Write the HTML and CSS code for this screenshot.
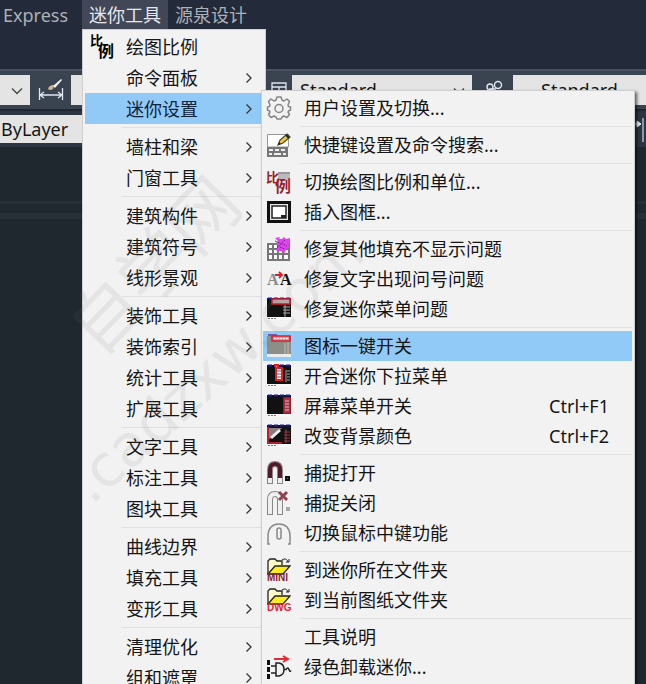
FILE: index.html
```html
<!DOCTYPE html>
<html lang="zh-CN">
<head>
<meta charset="utf-8">
<title>迷你工具</title>
<link rel="stylesheet" href="styles.css">
</head>
<body>
<svg class="defs" aria-hidden="true">
  <symbol id="arrow" viewBox="0 0 8 12"><path d="M1.5 1.5 6 6l-4.500 4.500" fill="none" stroke="#333" stroke-width="1.300"/></symbol>
  <symbol id="down" viewBox="0 0 12 8"><path d="M1 1.500 6 6.500l5-5" fill="none" stroke="#444" stroke-width="1.300"/></symbol>
  <symbol id="screen" viewBox="0 0 24 24">
    <path d="M0 1h24v19H0z" fill="#111"/><path d="M1 1.500h23" stroke="#1c1c9c" stroke-width="2" stroke-dasharray="4 2"/>
    <path d="M0 20h24v3H0z" fill="#f8f8f8"/><path d="M1 21.500h8" stroke="#777" stroke-dasharray="2 1"/>
  </symbol>
  <symbol id="folder" viewBox="0 0 24 18">
    <path d="M1 16V3l2-2h5l2 2h5v4" fill="#fffbc8" stroke="#222" stroke-width="1.300"/>
    <path d="M1 16 8 8h15l-7 8z" fill="#ffeb22" stroke="#222" stroke-width="1.300"/>
    <path d="M15 2c3-2 5-1 6 2m1-3v3h-3" fill="none" stroke="#222"/>
  </symbol>
</svg>
<div class="app">
  <nav class="menubar">
    <button>Express</button>
    <button class="open">迷你工具</button>
    <button>源泉设计</button>
  </nav>
  <div class="toolbar styles-row">
    <label class="field narrow"><select aria-label="图层"><option></option></select><svg class="caret"><use href="#down"/></svg></label>
    <button class="tool dim" aria-label="标注样式">
      <svg width="26" height="24" viewBox="0 0 26 24"><path d="M1.500 10v12M24.500 10v12M2 17h22M6 14l-4 3 4 3M20 14l4 3-4 3" fill="none" stroke="#dfe6ee" stroke-width="1.300"/><path d="M10 11q1-4 6-4l-1 4q-3 2-5 0z" fill="#cfb795"/><path d="m15 8 8-7 1 1-7 8z" fill="#f1f1ee"/></svg>
    </button>
    <label class="field dimstyle"><select aria-label="标注样式"><option></option></select></label>
    <button class="tool table" aria-label="表格样式">
      <svg width="16" height="16" viewBox="0 0 16 16"><path d="M1 1h14v14H1zM1 5h14M1 10h14M8 5v10" fill="none" stroke="#dfe6ee" stroke-width="1.300"/></svg>
    </button>
    <label class="field tablestyle"><select aria-label="表格样式"><option>Standard</option></select><svg class="caret"><use href="#down"/></svg></label>
    <button class="tool leader" aria-label="引线样式">
      <svg width="20" height="20" viewBox="0 0 20 20"><g fill="none" stroke="#dfe6ee" stroke-width="1.400"><circle cx="15" cy="5" r="3.500"/><circle cx="7" cy="7" r="3"/><path d="m1 17 5-8m0 0h7"/></g></svg>
    </button>
    <label class="field leaderstyle"><select aria-label="引线样式"><option>Standard</option></select></label>
  </div>
  <div class="toolbar layer-row">
    <label class="field layer"><select aria-label="颜色"><option>ByLayer</option></select></label>
    <button class="tool edge" aria-label="标注"><svg width="10" height="30" viewBox="0 0 10 30"><path d="M0 10h5M2 7l4 3-4 3z" fill="#e7edf2" stroke="#e7edf2"/><path d="M8 4v24" stroke="#a9bac8" stroke-width="1.500"/></svg></button>
  </div>
  <main class="canvas"><div class="tabstrip"></div></main>

  <div class="menu main-menu" role="menu">
    <div class="group">
      <button role="menuitem"><svg class="icon" viewBox="0 0 24 24"><text x="0" y="10" class="glyph-s">比</text><text x="8" y="22" class="glyph-m">例</text></svg><span>绘图比例</span></button>
      <button role="menuitem"><span>命令面板</span><svg class="arrow"><use href="#arrow"/></svg></button>
      <button role="menuitem" class="active"><span>迷你设置</span><svg class="arrow"><use href="#arrow"/></svg></button>
    </div>
    <div class="group">
      <button role="menuitem"><span>墙柱和梁</span><svg class="arrow"><use href="#arrow"/></svg></button>
      <button role="menuitem"><span>门窗工具</span><svg class="arrow"><use href="#arrow"/></svg></button>
    </div>
    <div class="group">
      <button role="menuitem"><span>建筑构件</span><svg class="arrow"><use href="#arrow"/></svg></button>
      <button role="menuitem"><span>建筑符号</span><svg class="arrow"><use href="#arrow"/></svg></button>
      <button role="menuitem"><span>线形景观</span><svg class="arrow"><use href="#arrow"/></svg></button>
    </div>
    <div class="group">
      <button role="menuitem"><span>装饰工具</span><svg class="arrow"><use href="#arrow"/></svg></button>
      <button role="menuitem"><span>装饰索引</span><svg class="arrow"><use href="#arrow"/></svg></button>
      <button role="menuitem"><span>统计工具</span><svg class="arrow"><use href="#arrow"/></svg></button>
      <button role="menuitem"><span>扩展工具</span><svg class="arrow"><use href="#arrow"/></svg></button>
    </div>
    <div class="group">
      <button role="menuitem"><span>文字工具</span><svg class="arrow"><use href="#arrow"/></svg></button>
      <button role="menuitem"><span>标注工具</span><svg class="arrow"><use href="#arrow"/></svg></button>
      <button role="menuitem"><span>图块工具</span><svg class="arrow"><use href="#arrow"/></svg></button>
    </div>
    <div class="group">
      <button role="menuitem"><span>曲线边界</span><svg class="arrow"><use href="#arrow"/></svg></button>
      <button role="menuitem"><span>填充工具</span><svg class="arrow"><use href="#arrow"/></svg></button>
      <button role="menuitem"><span>变形工具</span><svg class="arrow"><use href="#arrow"/></svg></button>
    </div>
    <div class="group">
      <button role="menuitem"><span>清理优化</span><svg class="arrow"><use href="#arrow"/></svg></button>
      <button role="menuitem"><span>组和遮罩</span><svg class="arrow"><use href="#arrow"/></svg></button>
    </div>
  </div>

  <div class="menu sub-menu" role="menu">
    <div class="group">
      <button role="menuitem"><svg class="icon" viewBox="0 0 24 24"><g fill="none" stroke="#858585" stroke-width="1.500" stroke-linejoin="round"><path d="M9 4 10 1h4l1 3 2 1 3-2 2.500 2.500L21 9l.500 1.500 2 .500v3l-2 1L21 16l1.500 2.500L20 21.500l-3-1.500-2 1-1 2h-4l-1-2-2-1-3 1.500L1.500 18.500 3 16l-.500-1-2-1v-3l2-.500L3 9 1.500 5.500 4 3l3 2z"/><circle cx="12" cy="12.500" r="4"/></g></svg><span>用户设置及切换...</span></button>
    </div>
    <div class="group">
      <button role="menuitem"><svg class="icon" viewBox="0 0 24 24"><path d="M.5 1.500h21V14H.5z" fill="#fff" stroke="#999"/><path d="M0 14h21v10H0z" fill="#777"/><path d="M2 16h4v2H2zm6 0h4v2H8zm6 0h4v2h-4zM2 20h3v2H2zm5 0h7v2H7zm9 0h3v2h-3z" fill="#eee"/><path d="m11 12 2-5 7-6 3 3-7 6z" fill="#f2c63a" stroke="#443" stroke-width="1.200"/><path d="m11 12 1-3 2 2z" fill="#222"/><path d="m19 2 3 3" stroke="#222" stroke-width="2"/></svg><span>快捷键设置及命令搜索...</span></button>
    </div>
    <div class="group">
      <button role="menuitem"><svg class="icon" viewBox="0 0 24 24"><path d="M11 2h12v8H11z" fill="#bbb"/><path d="M11 3h12" stroke="#999" stroke-width="2"/><g class="red"><text x="-1" y="12" class="glyph-s">比</text><text x="8" y="22" class="glyph-m">例</text></g></svg><span>切换绘图比例和单位...</span></button>
      <button role="menuitem"><svg class="icon" viewBox="0 0 24 24"><path d="M1.500 2.500h21v19h-21z" fill="#e5e8e6" stroke="#111" stroke-width="3"/><path d="M5 6h14v12H5z" fill="#fff" stroke="#222" stroke-width="1.500"/><path d="M14 15h5v3h-5z" fill="#222"/></svg><span>插入图框...</span></button>
    </div>
    <div class="group">
      <button role="menuitem"><svg class="icon" viewBox="0 0 24 24"><path d="M1 7h21v16H1zM1 12h21M1 17h21M6 7v16M11 7v16M16 7v16" fill="#fff" stroke="#777" stroke-width="2"/><path d="m8 1 5-1-1 2h3l2-2 2 2 4-1v5l-2 2 2 3-4 1-1 4-4-2-4 1-1-3 2-3-2-3 2-2z" fill="#df42ee"/><path d="m8 4 12 5M18 3l-9 9M10 9l8 3" stroke="#8b1ca0" stroke-dasharray="2 1"/></svg><span>修复其他填充不显示问题</span></button>
      <button role="menuitem"><svg class="icon" viewBox="0 0 24 24"><text x="0" y="18" class="letter gray">A</text><text x="13" y="18" class="letter">A</text><path d="M8 8h7m-3-3 3 3-3 3" fill="none" stroke="#e21d25" stroke-width="1.800"/></svg><span>修复文字出现问号问题</span></button>
      <button role="menuitem"><svg class="icon" viewBox="0 0 24 24"><use href="#screen"/><path d="M5 2h18v5H5z" fill="#b9a5a5" stroke="#cb1c2d" stroke-width="1.600"/><path d="M18 8v12M16 10h7m-7 3h7m-7 3h7" stroke="#aaa"/></svg><span>修复迷你菜单问题</span></button>
    </div>
    <div class="group">
      <button role="menuitem" class="active"><svg class="icon" viewBox="0 0 24 24"><path d="M0 2h24v18H0z" fill="#8e8e88"/><path d="M0 20h24v3H0z" fill="#ececec"/><path d="M1 1h9" stroke="#775ca5" stroke-width="2"/><path d="M5 2h18v5H5z" fill="#d29ba0" stroke="#d51f34" stroke-width="1.600"/><path d="M18 9v11M21 8v12" stroke="#bbb"/><path d="M7 4.500h14" stroke="#eee" stroke-dasharray="2 1"/></svg><span>图标一键开关</span></button>
      <button role="menuitem"><svg class="icon" viewBox="0 0 24 24"><use href="#screen"/><path d="M8 1h3v3h4v12H9V4z" fill="#fff" stroke="#e11d27" stroke-width="2"/><path d="M10 7h4m-4 3h4m-4 3h4" stroke="#555"/><path d="M19 6v12M20 7h3m-3 3h3m-3 3h3m-3 3h3" stroke="#aaa"/></svg><span>开合迷你下拉菜单</span></button>
      <button role="menuitem"><svg class="icon" viewBox="0 0 24 24"><use href="#screen"/><path d="M17 4h6v15h-6z" fill="#9e3b49" stroke="#b5263b" stroke-width="1.500"/><path d="M18 7h4m-4 3h4m-4 3h4m-4 3h4" stroke="#e0b7bc"/></svg><span>屏幕菜单开关</span><kbd>Ctrl+F1</kbd></button>
      <button role="menuitem"><svg class="icon" viewBox="0 0 24 24"><use href="#screen"/><path d="M1 4h14L1 16z" fill="#8b7b7b"/><path d="M1 3v16h14" fill="none" stroke="#b3202d" stroke-width="2"/><path d="m4 14 9-8" stroke="#eee" stroke-width="3"/><path d="M19 5v14M17 8h6m-6 3h6m-6 3h6m-6 3h6" stroke="#a03a49"/></svg><span>改变背景颜色</span><kbd>Ctrl+F2</kbd></button>
    </div>
    <div class="group">
      <button role="menuitem"><svg class="icon" viewBox="0 0 24 24"><path d="M3 23V9q0-6 5-6t5 6v14" fill="none" stroke="#888" stroke-width="6"/><path d="M3 22V9q0-6 5-6t5 6v13" fill="none" stroke="#eee" stroke-width="4"/><path d="M3 17V9q0-6 5-6t5 6v8" fill="none" stroke="#521929" stroke-width="4"/><path d="M19 16h3v3h-3z" fill="#777" stroke="#111" stroke-width="2"/></svg><span>捕捉打开</span></button>
      <button role="menuitem"><svg class="icon" viewBox="0 0 24 24"><path d="M3 24V9q0-6 5-6t5 6v15" fill="none" stroke="#888" stroke-width="6"/><path d="M3 23V9q0-6 5-6t5 6v14" fill="none" stroke="#f0f0f0" stroke-width="4"/><path d="m12 1 8 8m0-8-8 8" stroke="#8f4450" stroke-width="3"/><path d="M19 16h4v4h-4z" fill="#aaa"/></svg><span>捕捉关闭</span></button>
      <button role="menuitem"><svg class="icon" viewBox="0 0 24 24"><g fill="none" stroke="#888" stroke-width="1.500"><path d="M3 23H1V14Q2 3 12 3t11 11v9h-2"/><rect x="10" y="7" width="4" height="11" rx="2"/></g></svg><span>切换鼠标中键功能</span></button>
    </div>
    <div class="group">
      <button role="menuitem"><svg class="icon" viewBox="0 0 24 24"><use href="#folder" width="24" height="18"/><text x="0" y="23" class="tag maroon">MINI</text></svg><span>到迷你所在文件夹</span></button>
      <button role="menuitem"><svg class="icon" viewBox="0 0 24 24"><use href="#folder" width="24" height="18"/><text x="0" y="23" class="tag">DWG</text></svg><span>到当前图纸文件夹</span></button>
    </div>
    <div class="group">
      <button role="menuitem"><span>工具说明</span></button>
      <button role="menuitem"><svg class="icon" viewBox="0 0 24 24"><path d="M1.500 5v19" stroke="#111" stroke-width="3" stroke-dasharray="5 2"/><path d="M4 11h5m-5 7h5M9 8v13h3q5-1 5-6.500T12 8zM17 14.500h2q2-3 3 0t2 1" fill="none" stroke="#222" stroke-width="1.500"/><path d="M7 4h13m-4-3 5 3-5 3" fill="none" stroke="#e52b32" stroke-width="2"/></svg><span>绿色卸载迷你...</span></button>
    </div>
  </div>
  <div class="watermark name">自学网</div>
  <div class="watermark site">.cadzxw.com</div>
</div>
</body>
</html>
```
FILE: styles.css
```css
* { box-sizing: border-box; }

body {
  margin: 0;
  overflow: hidden;
  background: #20282f;
  color: #151515;
  font: 18px/24px "Noto Sans", "Noto Sans CJK SC", sans-serif;
}

button, select { font: inherit; color: inherit; border: 0; margin: 0; padding: 0; background: none; }
button { display: flex; align-items: center; text-align: left; white-space: nowrap; }
select { appearance: none; width: 100%; height: 100%; }

.defs { display: none; }

.app {
  position: relative;
  display: flex;
  flex-direction: column;
  height: 100vh;
  overflow: hidden;
  background: #232a39;
}

.menubar {
  display: flex;
  height: 29px;
  margin: 0 0 40px -4px;
  color: #adb1b8;
}
.menubar button { flex: 0 0 86px; padding: 0 7px; }
.menubar .open { background: #414757; color: #e4e7ee; }

.toolbar { display: flex; background: #3a4350; }
.styles-row { height: 40px; padding: 4px 0; border-top: 2px solid #4a5260; }
.layer-row { height: 38px; padding: 4px 0; border-top: 2px solid #20262f; background: #2c3542; }

.field { position: relative; display: block; background: #e3e4e3; }
.caret { position: absolute; right: 7px; top: 12px; width: 12px; height: 8px; }
.narrow { flex: 0 0 30px; }
.dimstyle { flex: 0 0 195px; }
.tablestyle { flex: 0 0 180px; }
.tablestyle select { padding-left: 8px; }
.leaderstyle { flex: 1; }
.leaderstyle select { padding-left: 28px; }
.layer { flex: 0 0 98%; }
.layer select { padding-left: 1px; }

.tool { justify-content: center; }
.dim { flex: 0 0 41px; }
.table { flex: 0 0 26px; }
.leader { flex: 0 0 41px; }
.edge { flex: 1; }

.canvas { flex: 1; padding-top: 54px; background: #20282f; }
.tabstrip { height: 18px; border: solid #283037; border-width: 3px 0 6px; }

.menu {
  position: absolute;
  background: #f2f2f2;
  border: 1px solid #cfcfcf;
}
.main-menu { left: 82px; top: 29px; width: 184px; padding: 1px 4px 1px 2px; }
.sub-menu { left: 261px; top: 90px; width: 374px; padding: 2px 2px 2px 1px; box-shadow: 2px 2px 3px rgba(0, 0, 0, .6); }

.group + .group::before {
  content: "";
  display: block;
  height: 1px;
  margin: 3px 0 3px 37px;
  background: #e0e0e0;
}
.menu button { width: 100%; padding-right: 8px; }
.main-menu button { height: 31px; padding-left: 5px; }
.sub-menu button { height: 30px; padding-left: 4px; }
.menu .active { background: #91c9f7; }
.menu span { margin-left: 12px; }
.menu span:first-child { margin-left: 36px; }
.sub-menu span { margin-left: 13px; }
.sub-menu span:first-child { margin-left: 37px; }
.main-menu .active { color: #10243c; }

.icon { flex: none; width: 24px; height: 24px; overflow: visible; }
.arrow { width: 8px; height: 12px; margin-left: auto; }
.menu kbd { margin-left: auto; padding-right: 15px; font: inherit; }

.glyph-s { font: bold 13px "Noto Sans CJK SC", sans-serif; }
.glyph-m { font: bold 16px "Noto Sans CJK SC", sans-serif; }
.red { fill: #981f2e; }
.letter { font: bold 16px "Liberation Serif", serif; fill: #111; }
.gray { fill: #8a8a8a; }
.tag { font: bold 10px "Liberation Sans", sans-serif; fill: #e3232b; }
.maroon { fill: #8b1e22; }

.watermark {
  position: absolute;
  color: rgba(110, 110, 110, .1);
  white-space: nowrap;
  transform-origin: 0 50%;
  pointer-events: none;
}
.name { left: 80px; top: 300px; font-size: 70px; line-height: 80px; transform: rotate(-46deg); }
.site { left: 78px; top: 456px; font: 58px/70px "DejaVu Sans", sans-serif; transform: rotate(-42deg); }
```
